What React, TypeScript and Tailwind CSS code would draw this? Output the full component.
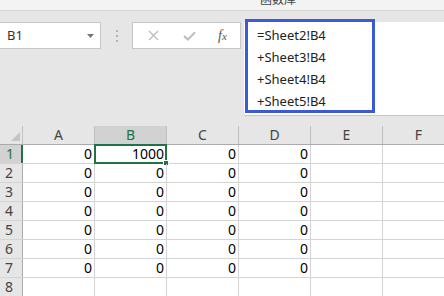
import React from "react";

const COLS = ["A", "B", "C", "D", "E", "F"];
const DATA: (string | null)[][] = [
  ["0", "1000", "0", "0", null, null],
  ["0", "0", "0", "0", null, null],
  ["0", "0", "0", "0", null, null],
  ["0", "0", "0", "0", null, null],
  ["0", "0", "0", "0", null, null],
  ["0", "0", "0", "0", null, null],
  ["0", "0", "0", "0", null, null],
  [null, null, null, null, null, null],
];

const font = { fontFamily: '"Noto Sans", "Noto Sans CJK SC", sans-serif' };

export default function App() {
  return (
    <div className="w-[444px] h-[296px] overflow-hidden bg-[#e6e6e6]" style={font}>
      {/* title strip */}
      <div className="h-[11px] bg-[#f3f3f3] border-b border-[#d4d4d4] overflow-hidden">
        <div
          className="ml-[260px] -mt-[8px] text-[12px] leading-[14px] text-[#444]"
          style={{ fontFamily: '"Noto Sans CJK SC", sans-serif' }}
        >
          函数库
        </div>
      </div>

      {/* formula band */}
      <div className="h-[115px] flex items-start pt-[11px]">
        {/* name box */}
        <div className="w-[101px] h-[27px] bg-white border border-l-0 border-[#c6c6c6] flex items-center justify-between pl-[7px] pr-[6px]">
          <span className="text-[13px] text-[#333] leading-none">B1</span>
          <svg width="7" height="4" viewBox="0 0 7 4">
            <path d="M0 0 L7 0 L3.5 4 Z" fill="#777" />
          </svg>
        </div>
        {/* dots */}
        <div className="w-[31px] h-[27px] flex flex-col items-center justify-center gap-[3px]">
          <div className="w-[2px] h-[2px] bg-[#b4b4b4]" />
          <div className="w-[2px] h-[2px] bg-[#b4b4b4]" />
          <div className="w-[2px] h-[2px] bg-[#b4b4b4]" />
        </div>
        {/* buttons */}
        <div className="w-[109px] h-[27px] bg-white border border-[#c6c6c6] flex items-center">
          <div className="w-[38px] flex justify-center pl-[2px]">
            <svg width="11" height="11" viewBox="0 0 11 11">
              <path d="M1 1 L10 10 M10 1 L1 10" stroke="#bdbdbd" strokeWidth="1.3" fill="none" />
            </svg>
          </div>
          <div className="w-[36px] flex justify-center">
            <svg width="13" height="10" viewBox="0 0 13 10">
              <path d="M1 5 L4.8 8.6 L12 1.2" stroke="#bdbdbd" strokeWidth="2" fill="none" />
            </svg>
          </div>
          <div className="flex-1 flex justify-center pr-[2px]">
            <span
              className="italic text-[14px] text-[#555] leading-none"
              style={{ fontFamily: '"Liberation Serif", serif' }}
            >
              f<span className="text-[11px]">x</span>
            </span>
          </div>
        </div>
        {/* formula area */}
        <div className="ml-[3px] flex-1 h-[94px] bg-white border-b border-[#c6c6c6]">
          <div className="ml-[1px] -mt-[3px] w-[130px] h-[94px] border-[3px] border-[#3b5ad6] pl-[9px] pt-[2px] text-[13px] text-[#222] leading-[22px]">
            <div>=Sheet2!B4</div>
            <div>+Sheet3!B4</div>
            <div>+Sheet4!B4</div>
            <div>+Sheet5!B4</div>
          </div>
        </div>
      </div>

      {/* grid */}
      <div className="bg-white">
        {/* header row */}
        <div className="flex h-[19px] bg-[#e6e6e6] border-b border-[#ababab]">
          <div className="w-[23px] shrink-0 border-r border-[#c0c0c0] flex items-end justify-end pr-[2px] pb-[3px]">
            <svg width="9" height="9" viewBox="0 0 9 9">
              <path d="M9 0 L9 9 L0 9 Z" fill="#c4c4c4" />
            </svg>
          </div>
          {COLS.map((c) => (
            <div
              key={c}
              className={
                c === "B"
                  ? "w-[72px] shrink-0 border-r border-[#c0c0c0] bg-[#d2d2d2] text-[#217346] flex items-center justify-center text-[14px] leading-none"
                  : "w-[72px] shrink-0 border-r border-[#c0c0c0] text-[#444] flex items-center justify-center text-[14px] leading-none"
              }
            >
              {c}
            </div>
          ))}
        </div>
        {/* data rows */}
        {DATA.map((row, r) => (
          <div key={r} className="flex h-[19px] border-b border-[#d4d4d4]">
            <div
              className={
                r === 0
                  ? "w-[23px] shrink-0 bg-[#d2d2d2] border-r-2 border-[#217346] text-[#217346] pl-[6px] flex items-center text-[14px] leading-none"
                  : "w-[23px] shrink-0 bg-[#e6e6e6] border-r border-[#ababab] text-[#444] pl-[5px] flex items-center text-[14px] leading-none"
              }
            >
              {r + 1}
            </div>
            {row.map((v, c) => (
              <div
                key={c}
                className="w-[72px] shrink-0 border-r border-[#d4d4d4] relative flex items-center justify-end pr-[2px] text-[14px] leading-none text-black"
              >
                {v}
                {r === 0 && c === 1 && (
                  <>
                    <div className="absolute -left-[1px] -top-[1px] -right-[1px] -bottom-[1px] border-2 border-[#217346]" />
                    <div className="absolute -right-[3px] -bottom-[3px] w-[6px] h-[6px] bg-[#217346] border border-white" />
                  </>
                )}
              </div>
            ))}
          </div>
        ))}
      </div>
    </div>
  );
}
